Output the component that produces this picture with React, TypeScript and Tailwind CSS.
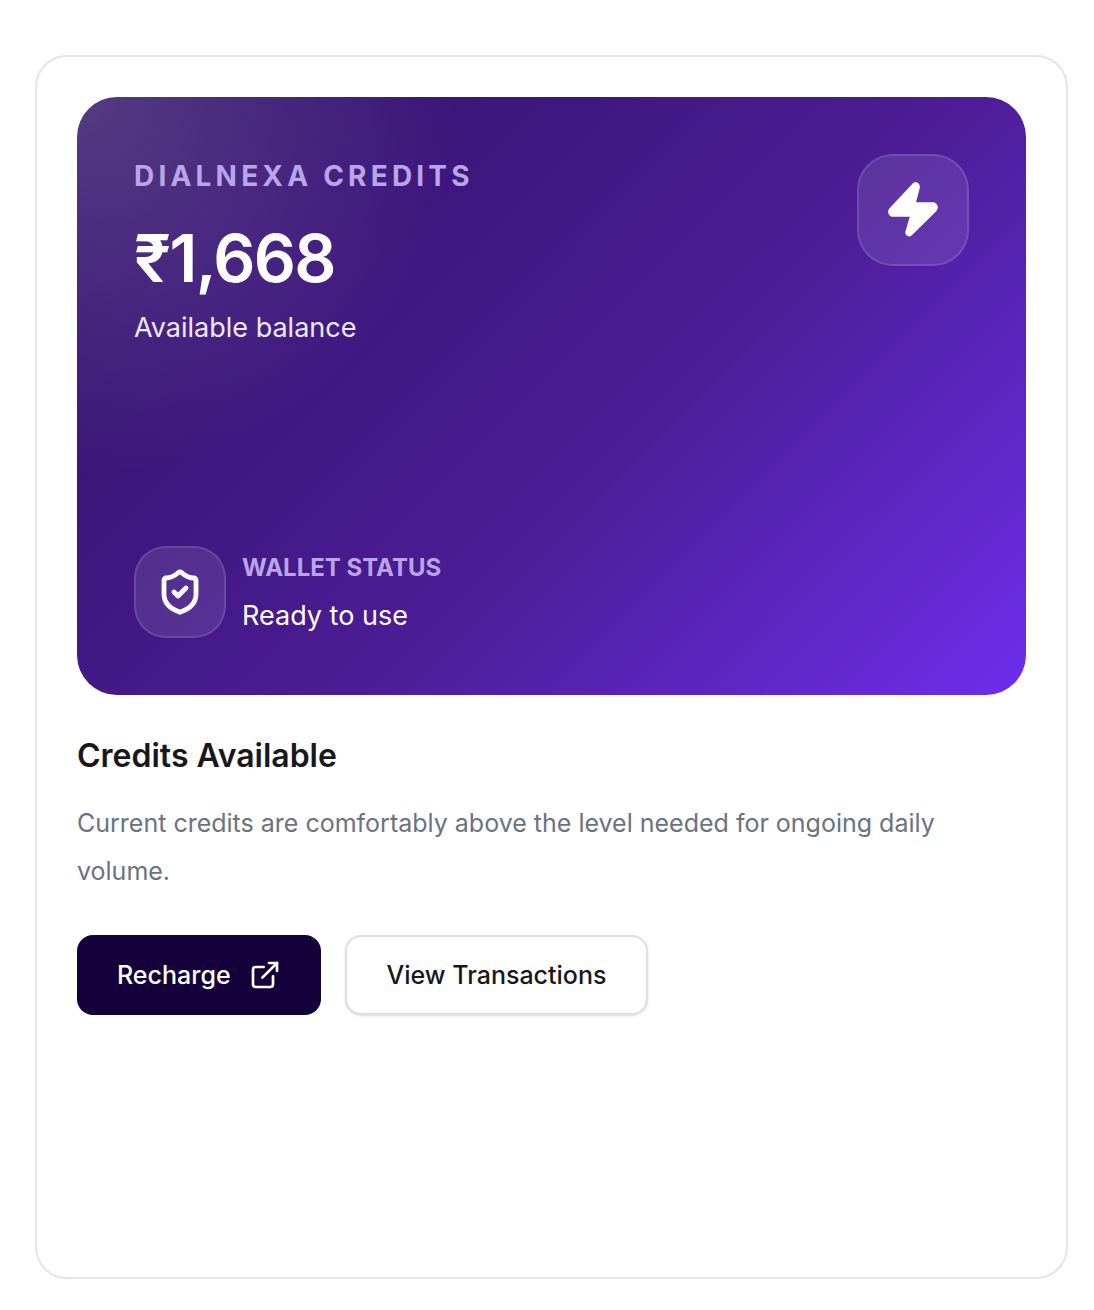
import type { ReactNode } from "react";
import { ExternalLink, ShieldCheck } from "lucide-react";

function IconTile({ className, children }: { className: string; children: ReactNode }) {
  return (
    <div
      className={`flex shrink-0 items-center justify-center border-2 border-white/12 bg-white/10 text-white ${className}`}
    >
      {children}
    </div>
  );
}

function BoltIcon() {
  return (
    <svg viewBox="0 0 50 56" className="h-14 w-[50px]" fill="currentColor" aria-hidden="true">
      <path d="M24.5 1.8 1.5 26.3C-1.4 29.5.8 34.8 5 34.8h16.8l-4.3 14.4c-1.2 4.2 3.4 7 6.4 4L48.2 29.2C51.4 25.8 49.4 20.3 44.8 20.3H28L31.7 6.2c1.2-4.7-4-7.9-7.2-4.4Z" />
    </svg>
  );
}

function CreditCard({ balance }: { balance: number }) {
  return (
    <section className="flex min-h-[598px] flex-col justify-between rounded-[40px] bg-[radial-gradient(circle_at_top_left,rgba(255,255,255,0.18),transparent_34%),linear-gradient(135deg,#2e1065_0%,#4c1d95_57%,#6d2eeb_100%)] p-[57px]">
      <div className="flex items-start justify-between gap-6">
        <div>
          <p className="pt-1 text-[28px] leading-9 font-bold tracking-[0.15em] text-[#b9a5e8] uppercase">
            Dialnexa Credits
          </p>
          <p className="mt-7 text-[66px] leading-[72px] font-semibold tracking-tight text-white">
            ₹{balance.toLocaleString("en-IN")}
          </p>
          <p className="mt-4 text-[27px] leading-9 text-[#ede9fe]">Available balance</p>
        </div>
        <IconTile className="size-28 rounded-[36px]">
          <BoltIcon />
        </IconTile>
      </div>

      <div className="flex items-center gap-4">
        <IconTile className="size-[92px] rounded-[32px]">
          <ShieldCheck className="size-12" strokeWidth={2.4} />
        </IconTile>
        <div>
          <p className="text-2xl leading-9 font-bold text-[#b9a5e8] uppercase">Wallet status</p>
          <p className="mt-3 text-[27px] leading-9 text-white">Ready to use</p>
        </div>
      </div>
    </section>
  );
}

export default function App() {
  return (
    <main className="flex min-h-screen bg-white pt-[55px] pr-[26px] pb-[31px] pl-[35px] font-['Inter',sans-serif]">
      <div className="flex-1 rounded-[32px] border-2 border-[#e4e4e9] bg-white p-10">
        <CreditCard balance={1668} />

        <h2 className="mt-10 text-[32px] leading-[42px] font-semibold text-[#18181b]">
          Credits Available
        </h2>
        <p className="mt-[22px] text-[25px] leading-12 text-[#6b7280]">
          Current credits are comfortably above the level needed for ongoing daily volume.
        </p>

        <div className="mt-10 flex flex-wrap gap-6">
          <button
            type="button"
            className="flex h-20 items-center gap-[18px] rounded-2xl bg-[#14003a] px-10 text-[25px] leading-10 font-medium text-white"
          >
            Recharge
            <ExternalLink className="size-8" strokeWidth={2} />
          </button>
          <button
            type="button"
            className="h-20 rounded-2xl border-2 border-[#dfdcee] bg-white px-10 text-[25px] leading-10 font-medium text-[#18181b] shadow-sm"
          >
            View Transactions
          </button>
        </div>
      </div>
    </main>
  );
}
